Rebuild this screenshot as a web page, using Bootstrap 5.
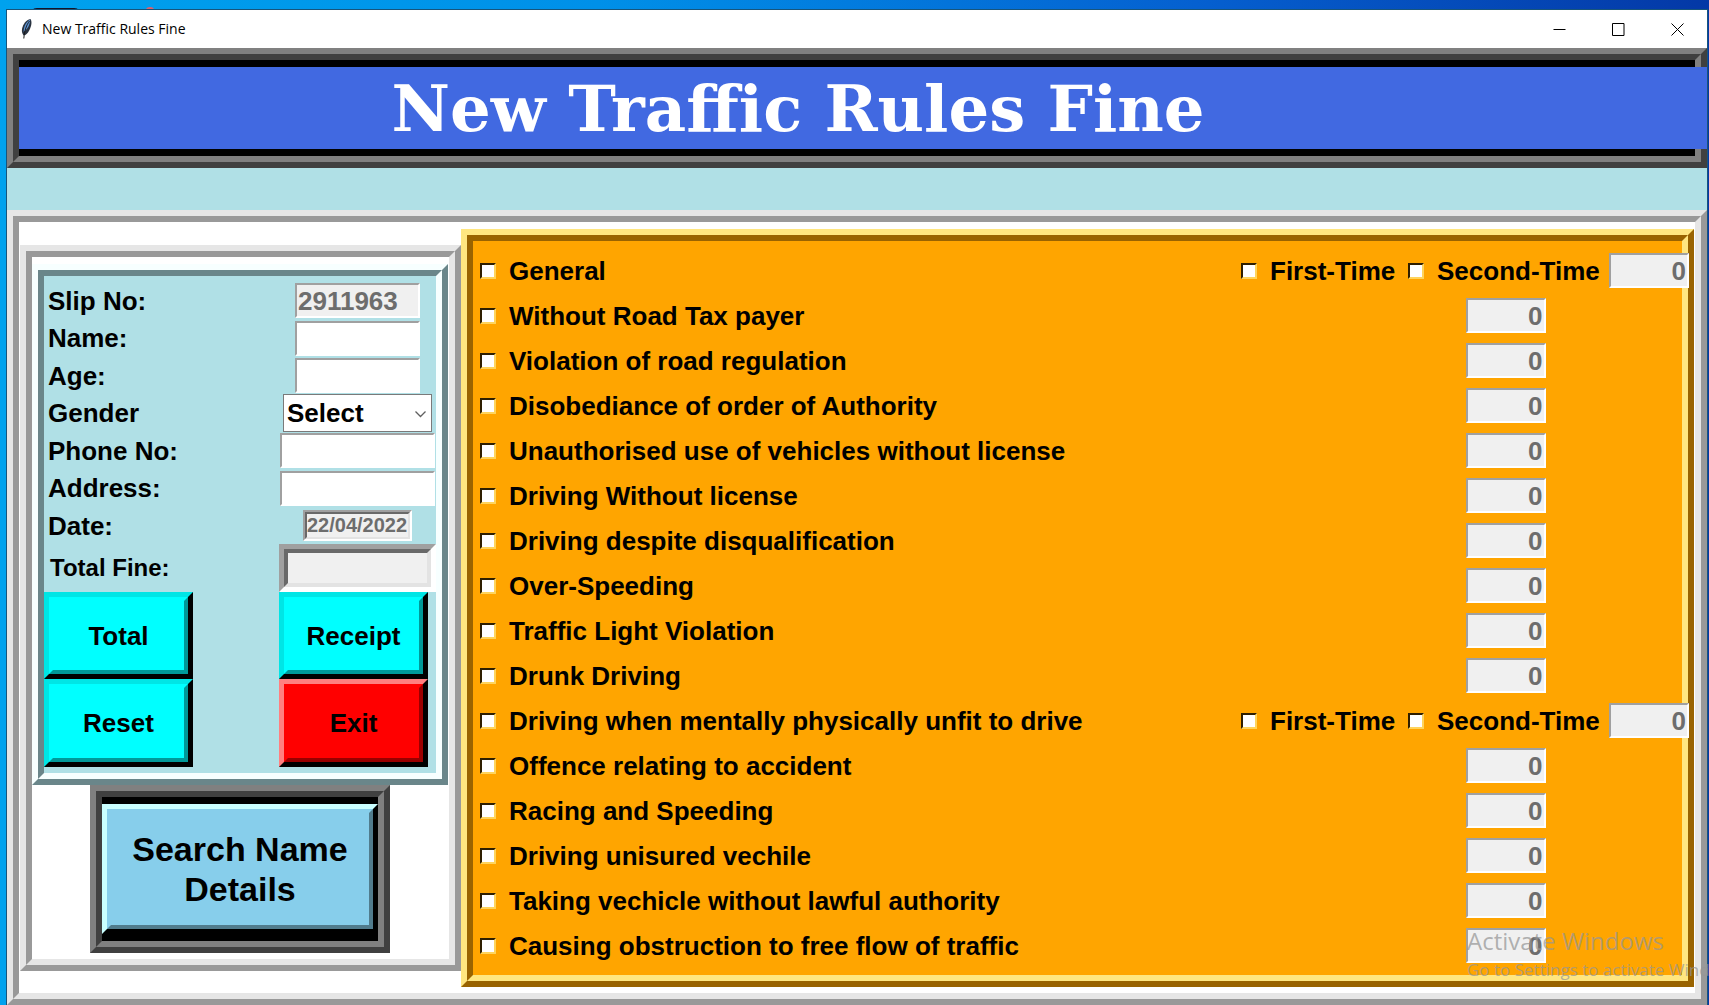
<!DOCTYPE html>
<html lang="en">
<head>
<meta charset="utf-8">
<meta name="viewport" content="width=device-width, initial-scale=1">
<title>New Traffic Rules Fine</title>
<link rel="stylesheet" href="https://cdn.jsdelivr.net/npm/bootstrap@5.3.0/dist/css/bootstrap.min.css">
<style>
  body { font-family: "Liberation Sans", Arial, sans-serif; font-size: 26px; font-weight: 700; line-height: 30px; color: #000;
    background: linear-gradient(90deg, #00a2ee 0%, #0090e8 35%, #0560d0 70%, #0438a6 100%); }
  .desktop { padding: 10px 2px 0 7px; }
  .desk-icons { left: 0; top: 0; }
  .app-window { background: #b0e0e6; box-shadow: 0 0 0 1px #17557c; }

  /* Tk relief: two nested mitred borders */
  .relief { position: relative; border: 6px solid; border-color: var(--hi) var(--lo) var(--lo) var(--hi); padding: 6px; }
  .relief::before { content: ""; position: absolute; inset: 0; border: 6px solid; border-color: var(--lo) var(--hi) var(--hi) var(--lo); pointer-events: none; }
  .tone-black { --hi: #808080; --lo: #404040; background: #000; }
  .tone-white { --hi: #e6e6e6; --lo: #999; background: #fff; }
  .tone-powder { --hi: #f7ffff; --lo: #6a868a; background: #b0e0e6; }
  .tone-orange { --hi: #ffe680; --lo: #996300; background: #ffa500; }

  .titlebar { height: 38px; padding-left: 13px; font: 400 14px/38px "Segoe UI", "Open Sans", sans-serif; }
  .win-btn { width: 59px; height: 38px; border: 0; background: none; padding: 0; }
  .banner { height: 120px; }
  .banner-text { position: relative; height: 82px; margin: 7px -12px 0 0; padding-right: 130px; background: #4169e1; color: #fff; font: 700 64px/84px Broadway, "DejaVu Serif", serif; }
  .body-frame { margin-top: 42px; padding: 13px 7px 12px 7px; }
  .side { flex: 0 0 441px; padding: 13px 7px 12px 6px; }

  .entry-form { display: grid; grid-template-columns: 1fr 157px; grid-template-rows: 37px 38px 37px 38px 37px 38px 37px 48px 87px 88px; padding: 12px 6px; align-items: center; }
  .entry-form > label { padding-left: 4px; }
  .entry-form > .field { justify-self: center; }
  .field { border: 2px solid; border-color: #a0a0a0 #fff #fff #a0a0a0; border-radius: 0; background-color: #fff; font: inherit; height: 35px; padding: 1px 1px 0; display: block; }
  .field:disabled { background-color: #f0f0f0; color: #6d6d6d; opacity: 1; }
  .w-short { width: 125px; }
  .w-long { width: 155px; }
  .pick { width: 149px; height: 38px; padding: 0 30px 0 3px; border: 1px solid #7a7a7a; outline: 0; border-radius: 0; font: inherit; color: #000;
    background-position: right 4px center; background-size: 13px 13px; --bs-form-select-bg-img: url("data:image/svg+xml,%3csvg xmlns='http://www.w3.org/2000/svg' viewBox='0 0 13 13'%3e%3cpath fill='none' stroke='%23606060' stroke-width='1.3' d='M1.5 4.5l5 5 5-5'/%3e%3c/svg%3e"); background-image: var(--bs-form-select-bg-img); }
  .sunk { position: relative; border: var(--b) solid; border-color: #a0a0a0 #fff #fff #a0a0a0; justify-self: center; }
  .sunk input { border: var(--b) solid; border-color: #696969 #e3e3e3 #e3e3e3 #696969; background: #f0f0f0; color: #6d6d6d; width: 100%; height: 100%; display: block; padding: 0; border-radius: 0; font: inherit; }
  .date-box { --b: 2px; width: 109px; height: 31px; font-size: 20px; }
  .sum-box { --b: 5px; width: 157px; height: 48px; }
  .sum-box input { border-width: 4px; }
  .entry-form > .sum-label { font-size: 24px; padding-left: 6px; }

  .tk-btn { position: relative; border: 5px solid; border-color: var(--hi) #000 #000 var(--hi); background: var(--face); font: inherit; color: #000; border-radius: 0; padding: 0; }
  .tk-btn::before { content: ""; position: absolute; inset: 0; border: 4px solid; border-color: var(--face) var(--lo) var(--lo) var(--face); }
  .tk-cyan { --face: #0ff; --hi: #00e5e5; --lo: #009999; }
  .tk-red { --face: #f00; --hi: #ff8080; --lo: #990000; }
  .tk-sky { --face: #87ceeb; --hi: #caffff; --lo: #517c8d; }
  .form-btn { width: 149px; height: 100%; }
  .search-frame { width: 300px; height: 168px; padding: 13px 6px 12px; }
  .search-btn { width: 100%; height: 130px; font-size: 34px; line-height: 40px; }

  .rules { padding: 13px 6px 5px; min-width: 0; }
  .rule-line { display: grid; grid-template-columns: 1fr 167px 201px 80px; height: 45px; align-items: center; margin-right: -7px; position: relative; z-index: 1; }
  .rule-line.plain { grid-template-columns: 1fr 207px 80px; }
  .tick { display: flex; align-items: center; gap: 13px; white-space: nowrap; }
  .rule-line > .tick:first-child { padding-left: 7px; }
  .tick input { appearance: none; flex: none; width: 16px; height: 16px; margin: 0; background: #fff; border: 2px solid; border-color: #2e1e00 #ffd45c #ffd45c #2e1e00; border-radius: 0; }
  .tick input:checked { background: #333; }
  .fine { width: 80px; text-align: right; justify-self: center; }

  .activation { right: -2px; bottom: 23px; width: 242px; color: rgba(150,150,150,.72); font-family: "Segoe UI", "Open Sans", sans-serif; font-weight: 400; white-space: nowrap; pointer-events: none; z-index: 5; }
  .activation .big { font-size: 24px; line-height: 34px; }
  .activation .sub { font-size: 17px; line-height: 24px; }
</style>
<script src="https://cdn.jsdelivr.net/npm/bootstrap@5.3.0/dist/js/bootstrap.bundle.min.js"></script>
</head>
<body>
<div class="desktop min-vh-100 d-flex flex-column position-relative overflow-hidden">
  <svg class="desk-icons position-absolute" width="170" height="10" aria-hidden="true"><path d="M33 10q0-2 4-2h37q4 0 4 2z" fill="#141428"/><path d="M146 10a4 3 0 0 1 8 0z" fill="#e0606a"/></svg>
  <div class="app-window d-flex flex-column flex-grow-1 position-relative">
    <header class="titlebar d-flex align-items-center bg-white">
      <svg width="14" height="22" viewBox="0 0 14 22" aria-hidden="true"><path d="M10.500 1C6 2 3 6 2 11c-.4 3 .3 5 1.700 6.500C7 17 9.500 13 11 8c.7-3 .7-5-.5-7z" fill="#29323f"/><path d="M10.200 1.500C6 4 3.800 8 3.600 14 7.500 11 10 7 10.200 1.500z" fill="#5b93d6"/><path d="M9.500 3C6.500 7 4.600 12 3.800 20.500" fill="none" stroke="#1b1b1b"/></svg>
      <span class="ms-2">New Traffic Rules Fine</span>
      <div class="ms-auto d-flex">
        <button class="win-btn" aria-label="Minimize"><svg width="13" height="13" viewBox="0 0 13 13" class="d-block mx-auto"><path d="M.5 6.500h12" stroke="#000"/></svg></button>
        <button class="win-btn" aria-label="Maximize"><svg width="13" height="13" viewBox="0 0 13 13" class="d-block mx-auto"><path d="M.5.5h11.500v12H.5z" fill="none" stroke="#000"/></svg></button>
        <button class="win-btn" aria-label="Close"><svg width="13" height="13" viewBox="0 0 13 13" class="d-block mx-auto"><path d="M.5.5l12 12M12.500.5l-12 12" stroke="#000"/></svg></button>
      </div>
    </header>
    <div class="banner relief tone-black"><h1 class="banner-text text-center">New Traffic Rules Fine</h1></div>

    <main class="body-frame relief tone-white d-flex align-items-center flex-grow-1">
      <section class="side relief tone-white">
        <form class="entry-form relief tone-powder">
          <label for="slip">Slip No:</label><input class="field w-short" id="slip" value="2911963" disabled>
          <label for="name">Name:</label><input class="field w-short" id="name">
          <label for="age">Age:</label><input class="field w-short" id="age">
          <label for="gender">Gender</label><select class="form-select field pick" id="gender"><option>Select</option><option>Male</option><option>Female</option></select>
          <label for="phone">Phone No:</label><input class="field w-long" id="phone">
          <label for="address">Address:</label><input class="field w-long" id="address">
          <label for="date">Date:</label><div class="sunk date-box"><input id="date" value="22/04/2022" disabled></div>
          <label class="sum-label" for="sum">Total Fine:</label><div class="sunk sum-box"><input id="sum" disabled></div>
          <button type="button" class="tk-btn tk-cyan form-btn">Total</button><button type="button" class="tk-btn tk-cyan form-btn">Receipt</button>
          <button type="button" class="tk-btn tk-cyan form-btn">Reset</button><button type="button" class="tk-btn tk-red form-btn">Exit</button>
        </form>
        <div class="search-frame relief tone-black mx-auto"><button type="button" class="tk-btn tk-sky search-btn">Search Name<br>Details</button></div>
      </section>

      <section class="rules relief tone-orange flex-grow-1 align-self-stretch" id="rules"></section>
    </main>
    <div class="activation position-absolute"><div class="big">Activate Windows</div><div class="sub">Go to Settings to activate Windows.</div></div>
  </div>
</div>
<script>
  const rules = ["General", "Without Road Tax payer", "Violation of road regulation", "Disobediance of order of Authority",
    "Unauthorised use of vehicles without license", "Driving Without license", "Driving despite disqualification", "Over-Speeding",
    "Traffic Light Violation", "Drunk Driving", "Driving when mentally physically unfit to drive", "Offence relating to accident",
    "Racing and Speeding", "Driving unisured vechile", "Taking vechicle without lawful authority", "Causing obstruction to free flow of traffic"];
  const repeatable = [0, 10];
  const tick = text => `<label class="tick"><input type="checkbox">${text}</label>`;
  document.getElementById("rules").innerHTML = rules.map((text, i) => {
    const twice = repeatable.includes(i);
    return `<div class="rule-line${twice ? "" : " plain"}">${tick(text)}${twice ? tick("First-Time") + tick("Second-Time") : ""}<input class="field fine" value="0" aria-label="Fine: ${text}" disabled></div>`;
  }).join("");
</script>
</body>
</html>
